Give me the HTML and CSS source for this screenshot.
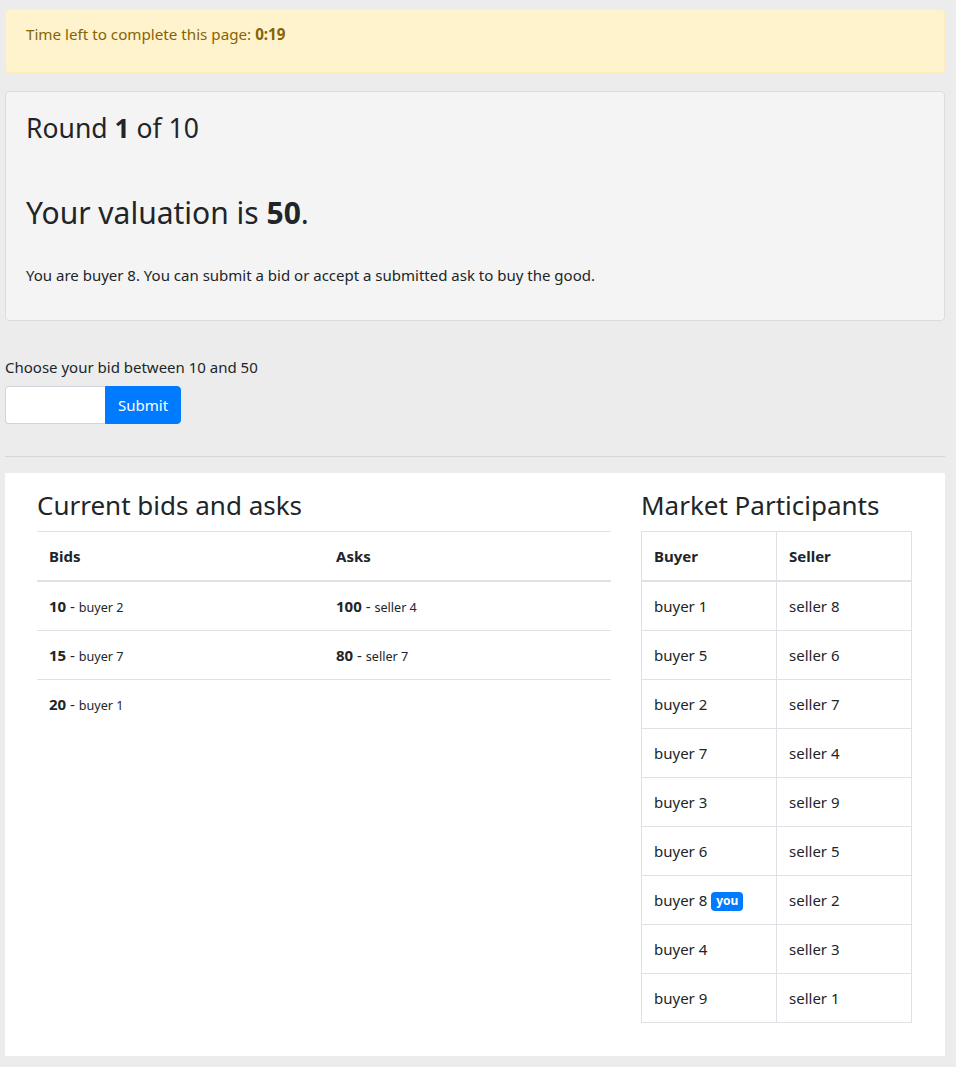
FILE: index.html
```html
<!DOCTYPE html>
<html lang="en">
<head>
<meta charset="utf-8">
<title>Round 1 of 10</title>
<link rel="stylesheet" href="styles.css">
</head>
<body>
<div class="page">
  <div class="alert">
    <p>Time left to complete this page: <b>0:19</b></p>
  </div>

  <div class="card">
    <h3 class="round">Round <b>1</b> of 10</h3>
    <h2 class="valuation">Your valuation is <b>50</b>.</h2>
    <p class="intro">You are buyer 8. You can submit a bid or accept a submitted ask to buy the good.</p>
  </div>

  <form class="bid-form" onsubmit="return false;">
    <label class="bid-label" for="bid">Choose your bid between 10 and 50</label>
    <div class="input-group">
      <input id="bid" class="bid-input" type="number" min="10" max="50">
      <button class="btn-submit" type="submit">Submit</button>
    </div>
  </form>

  <hr class="divider">

  <div class="market">
    <div class="col-main">
      <h3 class="section-title">Current bids and asks</h3>
      <table class="tbl tbl-half">
        <thead>
          <tr><th>Bids</th><th>Asks</th></tr>
        </thead>
        <tbody>
          <tr>
            <td><b>10</b> - <small>buyer 2</small></td>
            <td><b>100</b> - <small>seller 4</small></td>
          </tr>
          <tr>
            <td><b>15</b> - <small>buyer 7</small></td>
            <td><b>80</b> - <small>seller 7</small></td>
          </tr>
          <tr>
            <td><b>20</b> - <small>buyer 1</small></td>
            <td></td>
          </tr>
        </tbody>
      </table>
    </div>
    <div class="col-side">
      <h3 class="section-title">Market Participants</h3>
      <table class="tbl tbl-bordered">
        <thead>
          <tr><th>Buyer</th><th>Seller</th></tr>
        </thead>
        <tbody>
          <tr><td>buyer 1</td><td>seller 8</td></tr>
          <tr><td>buyer 5</td><td>seller 6</td></tr>
          <tr><td>buyer 2</td><td>seller 7</td></tr>
          <tr><td>buyer 7</td><td>seller 4</td></tr>
          <tr><td>buyer 3</td><td>seller 9</td></tr>
          <tr><td>buyer 6</td><td>seller 5</td></tr>
          <tr><td>buyer 8 <span class="badge">you</span></td><td>seller 2</td></tr>
          <tr><td>buyer 4</td><td>seller 3</td></tr>
          <tr><td>buyer 9</td><td>seller 1</td></tr>
        </tbody>
      </table>
    </div>
  </div>
</div>
</body>
</html>
```

FILE: styles.css
```css
* { box-sizing: border-box; }

html, body {
  margin: 0;
  padding: 0;
}

body {
  background: #ececec;
  color: #212529;
  font-family: "Segoe UI", "Noto Sans", "Open Sans", sans-serif;
  font-size: 16px;
  line-height: 24px;
}

.page {
  width: 940px;
  margin-left: 5px;
  padding-top: 9px;
  padding-bottom: 12px;
}

b { font-weight: 700; }

.alert {
  background: #fff3cd;
  border: 1px solid #ffeeba;
  color: #856404;
  border-radius: 4px;
  padding: 12px 20px 26px;
  margin-bottom: 18px;
}
.alert p { margin: 0; font-size: 15.2px; }

.card {
  background: #f4f4f4;
  border: 1px solid #dcdcdc;
  border-radius: 4px;
  padding: 20px 20px 33px;
}

h2, h3 {
  font-weight: 400;
  margin: 0 0 8px;
}
h3 { font-size: 26px; line-height: 33.6px; }
h2 { font-size: 30px; line-height: 38.4px; }
.round { font-size: 26.5px; }

.valuation { margin-top: 48px; margin-bottom: 31px; }
.intro { margin: 0; font-size: 15px; }

.bid-form { margin-top: 34px; }
.bid-label {
  display: block;
  font-size: 15px;
  margin-bottom: 7px;
}
.input-group { display: flex; }
.bid-input {
  width: 100px;
  height: 38px;
  border: 1px solid #ced4da;
  border-right: none;
  border-radius: 4px 0 0 4px;
  background: #fff;
  padding: 6px 12px;
  font: inherit;
  -moz-appearance: textfield;
}
.bid-input::-webkit-inner-spin-button,
.bid-input::-webkit-outer-spin-button { -webkit-appearance: none; margin: 0; }
.btn-submit {
  height: 38px;
  width: 76px;
  background: #007bff;
  color: #fff;
  border: 1px solid #007bff;
  border-radius: 0 4px 4px 0;
  font: inherit;
  font-size: 15px;
  padding: 6px 12px;
}

.divider {
  border: 0;
  border-top: 1px solid #d6d6d6;
  margin: 32px 0 16px;
}

.market {
  background: #fff;
  display: grid;
  grid-template-columns: 574px 271px;
  column-gap: 30px;
  padding: 16px 33px 33px 32px;
}

.tbl {
  width: 100%;
  border-collapse: collapse;
  margin: 0;
  font-size: 15px;
}
.tbl th, .tbl td {
  padding: 12px;
  line-height: 24px;
  height: 49px;
  text-align: left;
  vertical-align: top;
  border-top: 1px solid #dee2e6;
}
.tbl thead th {
  border-bottom: 2px solid #dee2e6;
  font-weight: 700;
}
.tbl small { font-size: 12.6px; line-height: 1; }
.tbl-half th, .tbl-half td { width: 50%; }

.tbl-bordered,
.tbl-bordered th,
.tbl-bordered td { border: 1px solid #dee2e6; }
.tbl-bordered thead th { border-bottom-width: 2px; }
.tbl-bordered th:first-child,
.tbl-bordered td:first-child { width: 135px; }

.badge {
  display: inline-block;
  background: #007bff;
  color: #fff;
  font-size: 12px;
  font-weight: 700;
  line-height: 1;
  padding: 3px 5px 4px;
  border-radius: 4px;
  vertical-align: 1px;
}
```
